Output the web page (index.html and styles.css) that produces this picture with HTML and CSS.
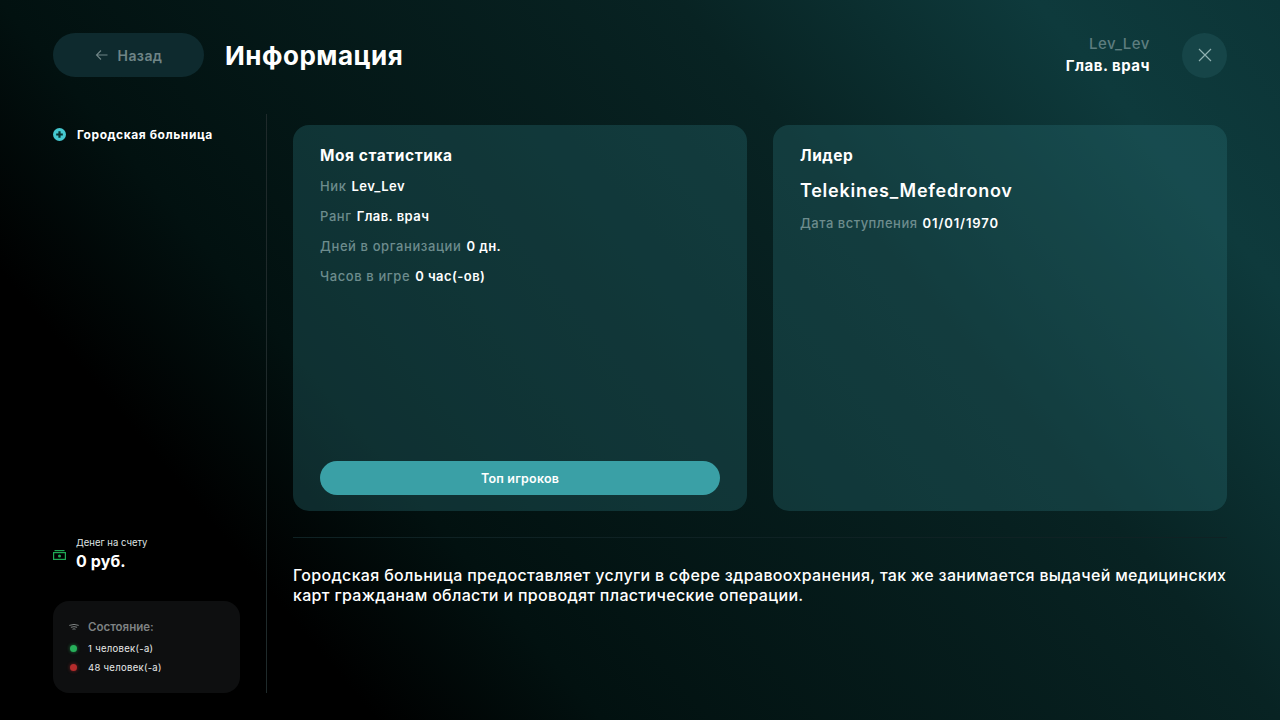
FILE: index.html
```html
<!DOCTYPE html>
<html lang="ru">
<head>
<meta charset="utf-8">
<title>Информация</title>
<link rel="stylesheet" href="styles.css">
</head>
<body>
<div class="page">
  <header class="top">
    <div class="top-left">
      <button class="back"><svg class="back-ico" width="14" height="14" viewBox="0 0 14 14" fill="none"><path d="M12.500 7H1.500M6 2.500 1.500 7 6 11.500" stroke="currentColor" stroke-width="1.100"/></svg><span>Назад</span></button>
      <h1 class="title">Информация</h1>
    </div>
    <div class="top-right">
      <div class="user"><div class="user-nick">Lev_Lev</div><div class="user-rank">Глав. врач</div></div>
      <button class="close"><svg width="14" height="14" viewBox="0 0 14 14" fill="none"><path d="M1 1 13 13M13 1 1 13" stroke="currentColor" stroke-width="1.200"/></svg></button>
    </div>
  </header>
  <div class="body">
    <aside class="side">
      <div class="org">
        <svg class="org-ico" width="13" height="13" viewBox="0 0 13 13"><circle cx="6.500" cy="6.500" r="6.500" fill="#45c8d0"/><path d="M6.500 3.200v6.600M3.200 6.500h6.600" stroke="#07302f" stroke-width="2.200"/></svg>
        <span>Городская больница</span>
      </div>
      <div class="money">
        <svg class="money-ico" width="13" height="10" viewBox="0 0 13 10" fill="none"><rect x=".6" y="2.600" width="11.800" height="6.800" stroke="#1fa855" stroke-width="1.200"/><path d="M1.500 .6h10" stroke="#1fa855" stroke-width="1.200"/><rect x="5" y="4.500" width="3" height="3" rx="1.500" fill="#1fa855"/></svg>
        <div><div class="money-label">Денег на счету</div><div class="money-val">0 руб.</div></div>
      </div>
      <div class="state">
        <div class="state-head">
          <svg width="10" height="7" viewBox="0 0 10 7" fill="none"><path d="M.3 1.400Q5-.6 9.700 1.400M1.900 3.300Q5 2 8.100 3.300M3.500 5.200Q5 4.500 6.500 5.200" stroke="#8a8f8f" stroke-width=".9"/></svg>
          <span>Состояние:</span>
        </div>
        <div class="state-row"><i class="dot dot-green"></i><span>1 человек(-а)</span></div>
        <div class="state-row"><i class="dot dot-red"></i><span>48 человек(-а)</span></div>
      </div>
    </aside>
    <main class="main">
      <div class="cards">
        <section class="card">
          <h2 class="card-title">Моя статистика</h2>
          <div class="stats">
            <div class="stat"><span class="k">Ник</span><span class="v">Lev_Lev</span></div>
            <div class="stat"><span class="k">Ранг</span><span class="v">Глав. врач</span></div>
            <div class="stat"><span class="k">Дней в организации</span><span class="v">0 дн.</span></div>
            <div class="stat"><span class="k">Часов в игре</span><span class="v">0 час(-ов)</span></div>
          </div>
          <button class="top-btn">Топ игроков</button>
        </section>
        <section class="card">
          <h2 class="card-title">Лидер</h2>
          <div class="leader">Telekines_Mefedronov</div>
          <div class="stat date"><span class="k">Дата вступления</span><span class="v">01/01/1970</span></div>
        </section>
      </div>
      <p class="desc">Городская больница предоставляет услуги в сфере здравоохранения, так же занимается выдачей медицинских карт гражданам области и проводят пластические операции.</p>
    </main>
  </div>
</div>
</body>
</html>
```
FILE: styles.css
```css
* { box-sizing: border-box; }
html, body { margin: 0; height: 100%; }
body {
  width: 1280px; height: 720px; overflow: hidden;
  font-family: "Inter", "Noto Sans", sans-serif;
  color: #fff;
  background: linear-gradient(50deg, #000 20%, #021110 32%, #082323 68%, #0e3a3c 87%, #0c3537 100%);
}
.page { height: 720px; padding: 33px 53px 27px; display: flex; flex-direction: column; }
button { font-family: inherit; border: 0; padding: 0; }
.top { display: flex; justify-content: space-between; align-items: center; height: 44px; }
.top-left { display: flex; align-items: center; gap: 21px; }
.back { width: 151px; height: 44px; border-radius: 22px; background: #0e2a2e; color: #6f8486; display: flex; align-items: center; justify-content: center; gap: 9px; font-size: 14px; font-weight: 600; letter-spacing: .4px; }
.title { margin: 0; font-size: 26px; font-weight: 700; letter-spacing: .5px; }
.top-right { display: flex; align-items: center; gap: 32px; }
.user { text-align: right; font-size: 15px; line-height: 22px; letter-spacing: .5px; }
.user-nick { color: #5d7d7f; font-weight: 500; }
.user-rank { font-weight: 700; }
.close { width: 45px; height: 45px; border-radius: 50%; background: #164548; color: #8fb0b0; display: flex; align-items: center; justify-content: center; }
.body { flex: 1; display: flex; margin-top: 37px; min-height: 0; }
.side { width: 214px; border-right: 1px solid #1f2a2b; display: flex; flex-direction: column; padding-right: 26px; }
.org { display: flex; align-items: center; gap: 11px; font-size: 12px; font-weight: 700; margin-top: 13px; letter-spacing: .55px; }
.money { margin-top: auto; display: flex; align-items: center; gap: 10px; }
.money-label { font-size: 9.500px; line-height: 12px; color: #dfe3e3; }
.money-val { font-size: 16px; font-weight: 700; line-height: 22px; margin-top: 1px; letter-spacing: .1px; }
.state { margin-top: 29px; height: 92px; border-radius: 16px; background: #0e0f10; padding: 16px 16px; }
.state-head { display: flex; align-items: center; gap: 9px; font-size: 11.500px; font-weight: 600; color: #7e8283; margin-bottom: 2px; line-height: 20px; }
.state-row { display: flex; align-items: center; gap: 11px; font-size: 9.500px; line-height: 19px; color: #e8eaea; padding-left: 1px; letter-spacing: .3px; }
.dot { width: 7px; height: 7px; border-radius: 50%; }
.dot-green { background: #27b05a; box-shadow: 0 0 3px 1px rgba(39,176,90,.35); }
.dot-red { background: #b52c2c; box-shadow: 0 0 3px 1px rgba(181,44,44,.35); }
.main { flex: 1; padding: 11px 0 0 26px; min-width: 0; }
.cards { display: grid; grid-template-columns: 454px 454px; gap: 26px; height: 386px; }
.card { border-radius: 16px; padding: 21px 27px 16px; display: flex; flex-direction: column; background: rgba(41,110,116,.35); }
.card-title { margin: 0 0 10px; font-size: 15.500px; font-weight: 700; line-height: 20px; letter-spacing: .55px; }
.stats { display: flex; flex-direction: column; gap: 10px; flex: 1; }
.stat { display: flex; gap: 5px; font-size: 13px; line-height: 20px; letter-spacing: .6px; }
.k { color: #6d8c8d; font-weight: 500; }
.v { font-weight: 600; letter-spacing: .45px; }
.date .k { letter-spacing: .5px; }
.date .v { letter-spacing: .9px; }
.top-btn { height: 34px; border-radius: 17px; background: #3aa0a6; color: #fff; font-size: 12.500px; font-weight: 600; letter-spacing: .2px; }
.leader { font-size: 18px; font-weight: 600; line-height: 26px; margin: 2px 0 9px; letter-spacing: .75px; }
.desc { margin: 26px 0 0; padding-top: 27px; border-top: 1px solid #0f2224; font-size: 16px; font-weight: 500; line-height: 20px; letter-spacing: .32px; }
```
